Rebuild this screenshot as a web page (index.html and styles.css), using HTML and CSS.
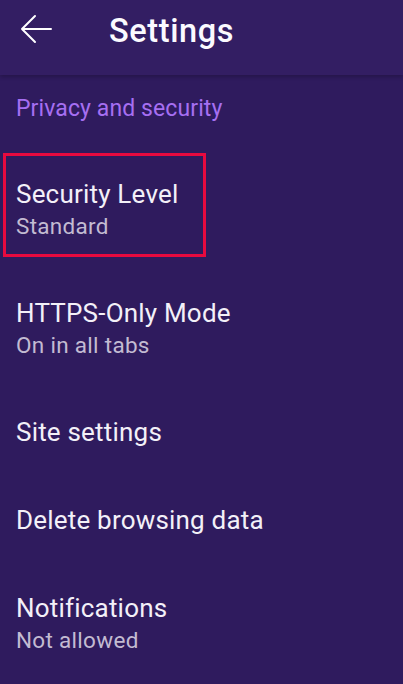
FILE: index.html
```html
<!DOCTYPE html>
<html lang="en">
<head>
<meta charset="utf-8">
<title>Settings</title>
<link rel="stylesheet" href="styles.css">
</head>
<body>
<header class="toolbar">
  <svg class="back" width="32" height="30" viewBox="0 0 32 30" aria-hidden="true">
    <path d="M2 15H31M15 2L2 15L15 28" fill="none" stroke="#ffffff" stroke-width="2" stroke-linecap="round" stroke-linejoin="round"/>
  </svg>
  <h1 class="title">Settings</h1>
</header>
<main class="list">
  <div class="category">Privacy and security</div>
  <div class="item highlighted">
    <div class="item-title">Security Level</div>
    <div class="item-summary">Standard</div>
    <div class="mark"></div>
  </div>
  <div class="item">
    <div class="item-title">HTTPS-Only Mode</div>
    <div class="item-summary">On in all tabs</div>
  </div>
  <div class="item">
    <div class="item-title">Site settings</div>
  </div>
  <div class="item">
    <div class="item-title">Delete browsing data</div>
  </div>
  <div class="item">
    <div class="item-title">Notifications</div>
    <div class="item-summary">Not allowed</div>
  </div>
</main>
</body>
</html>
```
FILE: styles.css
```css
html, body {
  margin: 0;
  padding: 0;
}
body {
  background: #2f1b5e;
  font-family: Roboto, "Noto Sans", "Liberation Sans", sans-serif;
  width: 403px;
  height: 684px;
  overflow: hidden;
}
.toolbar {
  position: relative;
  z-index: 1;
  display: flex;
  align-items: center;
  height: 62px;
  padding-bottom: 13px;
  background: #331e63;
  box-shadow: 0 2px 4px rgba(0, 0, 0, 0.22);
}
.back {
  margin-left: 20px;
  margin-top: -4px;
  flex: none;
}
.title {
  margin: 0 0 0 57px;
  font-size: 32.5px;
  font-weight: 500;
  color: #fbfaff;
  letter-spacing: 0.6px;
}
.list {
  display: flex;
  flex-direction: column;
}
.category {
  padding: 19px 16px 26px;
  line-height: 30px;
  font-size: 23px;
  color: #a66ff2;
  letter-spacing: 0.1px;
}
.item {
  position: relative;
  padding: 26px 16px;
}
.item-title {
  font-size: 26px;
  line-height: 36px;
  color: #f3f0f8;
  letter-spacing: 0.2px;
}
.item-summary {
  font-size: 22.5px;
  line-height: 28px;
  padding-bottom: 3px;
  color: #c3bbd2;
  letter-spacing: 0.3px;
}
.mark {
  position: absolute;
  left: 3px;
  top: 3px;
  width: 197px;
  height: 98px;
  border: 3px solid #e80a3f;
}
```
